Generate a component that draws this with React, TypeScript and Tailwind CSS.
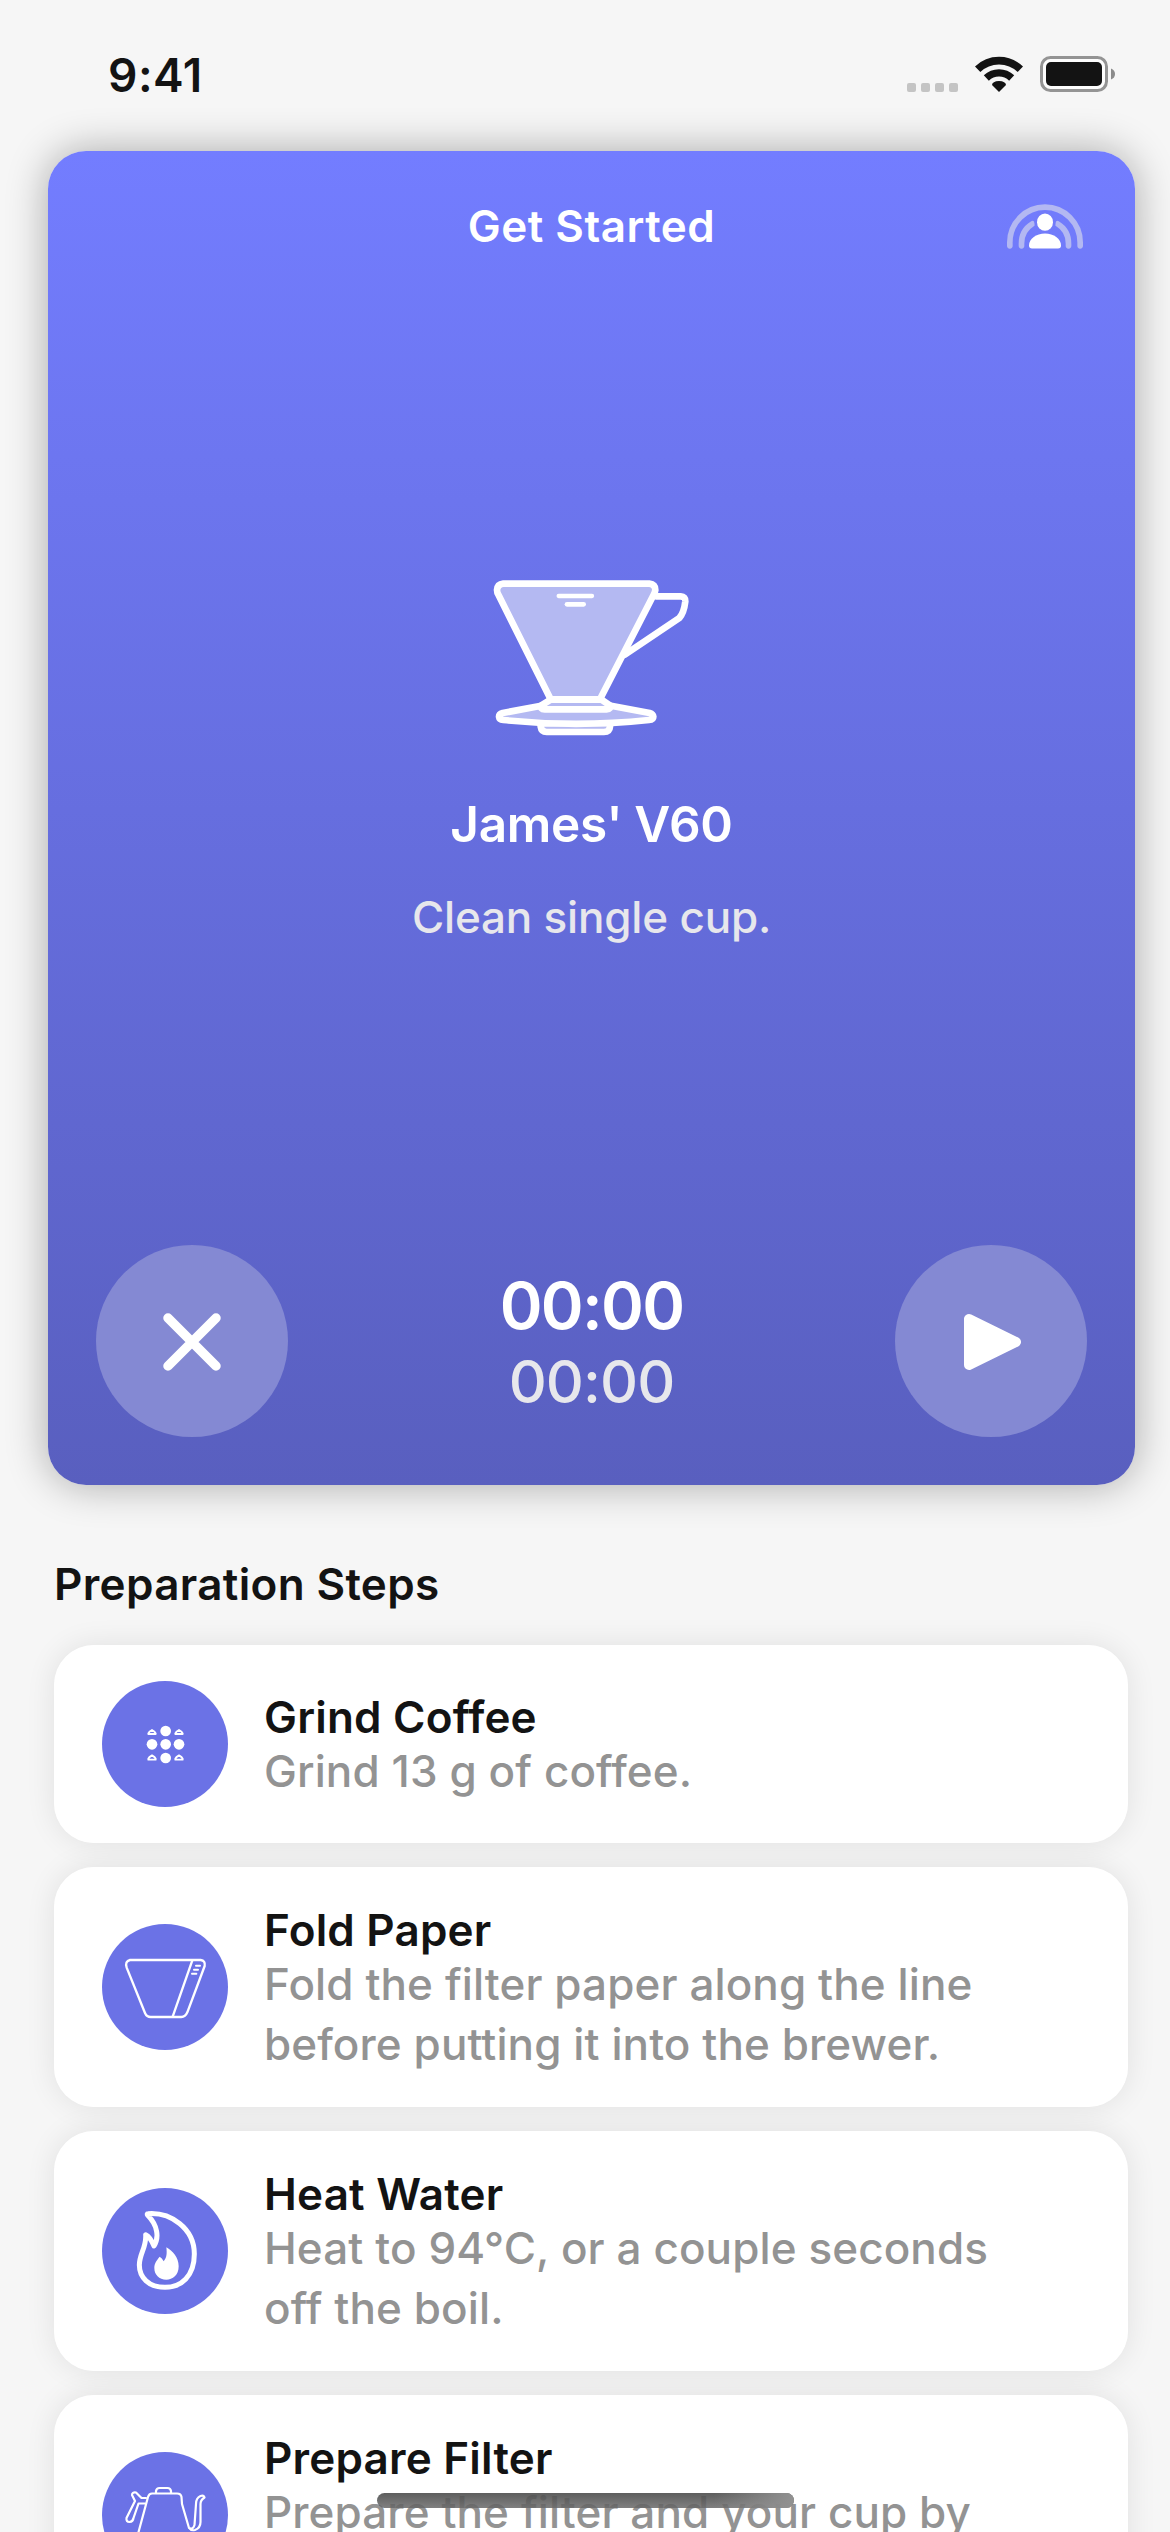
import type { ReactNode } from 'react'

function StatusBar() {
    return (
        <div className="flex h-[151px] items-start justify-between pt-12 pl-[108px] pr-[55px]">
            <span className="text-[46px] leading-[54px] font-semibold tracking-[0.5px]">9:41</span>
            <div className="flex items-end gap-[17px] pt-2">
                <svg width="51" height="36" viewBox="0 0 51 36" fill="#c4c4c4">
                    <rect x="0" y="27" width="9" height="9" rx="2" />
                    <rect x="14" y="27" width="9" height="9" rx="2" />
                    <rect x="28" y="27" width="9" height="9" rx="2" />
                    <rect x="42" y="27" width="9" height="9" rx="2" />
                </svg>
                <svg width="48" height="36" viewBox="0 0 144 108" fill="none" stroke="#131313">
                    <path d="M8 40 A92 92 0 0 1 136 40" strokeWidth="23" />
                    <path d="M34 66 A55 55 0 0 1 110 66" strokeWidth="22" />
                    <path d="M72 108 L51 87 Q52 76 72 75 Q92 76 93 87 Z" fill="#131313" stroke="none" />
                </svg>
                <svg width="75" height="36" viewBox="0 0 75 36">
                    <rect x="1.5" y="1.5" width="65" height="33" rx="9" fill="#fdfdfd" stroke="#949494" strokeWidth="3" />
                    <rect x="6" y="6" width="56" height="24" rx="5" fill="#131313" />
                    <path d="M71 12.5 Q75 14 75 18 Q75 22 71 23.5 Z" fill="#8b8b8b" />
                </svg>
            </div>
        </div>
    )
}

function ShareIcon() {
    return (
        <svg width="76" height="45" viewBox="0 0 228 134" fill="none">
            <g stroke="#b3b8f2" strokeWidth="17" strokeLinecap="round">
                <path d="M8.500 125 V115 A105.500 106 0 0 1 219.500 115 V125" />
                <path d="M43.500 125 V118 C43.500 92 56 71 76 59" />
                <path d="M184.500 125 V118 C184.500 92 172 71 152 59" />
            </g>
            <ellipse cx="114" cy="54" rx="32" ry="34" fill="#727bfa" />
            <ellipse cx="114" cy="54" rx="24" ry="26" fill="#fff" />
            <path d="M66 124 C66 104 88 88 114 88 C140 88 162 104 162 124 Q162 133 153 133 H75 Q66 133 66 124 Z" fill="#fff" />
        </svg>
    )
}

function DripperIcon() {
    return (
        <svg
            width="240"
            height="210"
            viewBox="4 0 720 630"
            fill="#b4b9f2"
            stroke="#fff"
            strokeWidth="20"
            strokeLinejoin="round"
            strokeLinecap="round"
        >
            <path d="M210 520 V530 Q212 546 228 546 H400 Q417 546 418 530 V518 Z" />
            <path d="M228 464 L96 489 Q85 492 85 500 Q86 509 98 510 Q316 533 535 510 Q548 509 548 500 Q547 492 537 489 L405 464 Z" />
            <path d="M240 449 L212 466 Q208 478 222 478 H408 Q422 478 417 466 L393 449 Z" />
            <path d="M556 139 H630 Q645 140 644 154 Q640 188 626 204 L462 314" fill="none" />
            <path d="M98 101 H536 Q554 103 554 120 Q553 128 549 134 L388 448 H240 L84 136 Q79 128 79 120 Q80 103 98 101 Z" />
            <path d="M264 138 H364" strokeWidth="13" />
            <path d="M289 163 H339" strokeWidth="14" />
        </svg>
    )
}

function GrindIcon() {
    return (
        <svg width="126" height="126" viewBox="0 0 378 378" fill="#fff">
            <circle cx="191" cy="150" r="16" />
            <circle cx="150" cy="190" r="16" />
            <circle cx="191" cy="190" r="16" />
            <circle cx="231" cy="190" r="16" />
            <circle cx="191" cy="231" r="16" />
            <g fill="none" stroke="#fff" strokeWidth="5.500" strokeLinejoin="round">
                <path d="M139 157 Q141 152 150 147 Q159 152 161 157 V159 H139 Z" />
                <path d="M220 157 Q222 152 231 147 Q240 152 242 157 V159 H220 Z" />
                <path d="M139 233 Q141 228 150 223 Q159 228 161 233 V236 H139 Z" />
                <path d="M220 233 Q222 228 231 223 Q240 228 242 233 V236 H220 Z" />
            </g>
        </svg>
    )
}

function PaperIcon() {
    return (
        <svg
            width="126"
            height="126"
            viewBox="0 0 378 378"
            fill="none"
            stroke="#fff"
            strokeWidth="7"
            strokeLinecap="round"
            strokeLinejoin="round"
        >
            <path d="M84 108 H296 Q311 110 308 126 L256 265 Q250 279 238 279 H146 Q134 279 129 267 L74 131 Q68 112 84 108 Z" />
            <path d="M271 109 L212 278" />
            <path d="M282 125 H294 M276 137 H288 M270 149 H283" strokeWidth="6" />
        </svg>
    )
}

function FlameIcon() {
    return (
        <svg width="126" height="126" viewBox="0 0 378 378" fill="none">
            <path
                d="M138 77 C205 72 277 120 277 198 C277 264 238 298 189 298 C140 298 112 268 112 231 C112 198 134 177 131 140 C143 146 150 159 156 174 C172 148 167 112 137 82 Q134 77 138 77 Z"
                stroke="#fff"
                strokeWidth="15"
                strokeLinejoin="round"
            />
            <path
                d="M193 178 C212 188 230 209 230 235 C230 262 212 275 193 275 C171 275 157 260 157 240 C157 226 164 217 173 206 Q180 209 185 220 C195 209 195 195 193 178 Z"
                fill="#fff"
            />
        </svg>
    )
}

function KettleIcon() {
    return (
        <svg
            width="126"
            height="126"
            viewBox="0 0 126 126"
            fill="none"
            stroke="#fff"
            strokeWidth="2.200"
            strokeLinecap="round"
            strokeLinejoin="round"
        >
            <path d="M54 41 V39 Q54.500 36 57.500 36 H65.500 Q68.500 36 69 39 V41" />
            <path d="M36 82 L46 45 Q47 41.500 50 41.500 H75 Q79 41.500 79.500 45 L80 52 L87 76 Q89 79 93 78 Q98.500 76 98.500 70 V52 Q98.500 48 102.500 45.500 Q102 43 98.500 44 Q94 46 94 52 L92.500 73 Q91 78 87 76" />
            <path d="M44 46 H39.500 L34 40.500 Q30 40 30 43 L33 49 L24.500 66 Q24 70 27.500 70 Q31 69.500 31.500 66 L36.500 51.500 H43" />
        </svg>
    )
}

const steps: { title: string; text: ReactNode; icon: ReactNode }[] = [
    { title: 'Grind Coffee', text: 'Grind 13 g of coffee.', icon: <GrindIcon /> },
    {
        title: 'Fold Paper',
        text: <>Fold the filter paper along the line<br />before putting it into the brewer.</>,
        icon: <PaperIcon />,
    },
    {
        title: 'Heat Water',
        text: <>Heat to 94°C, or a couple seconds<br />off the boil.</>,
        icon: <FlameIcon />,
    },
    {
        title: 'Prepare Filter',
        text: <>Prepare the filter and your cup by<br />&nbsp;</>,
        icon: <KettleIcon />,
    },
]

function BrewCard() {
    return (
        <section className="flex h-[1334px] flex-col rounded-[38px] bg-linear-to-b from-[#737dff] to-[#595fbf] p-12 text-white shadow-[0_0_42px_rgba(0,0,0,0.32)]">
            <div className="grid grid-cols-3 items-center">
                <h1 className="col-start-2 text-center text-[44px] leading-[54px] font-semibold tracking-[0.5px]">Get Started</h1>
                <div className="flex justify-end pr-1">
                    <ShareIcon />
                </div>
            </div>
            <div className="flex flex-1 flex-col items-center justify-center pb-1">
                <DripperIcon />
                <h2 className="mt-[34px] text-[49.5px] leading-[60px] font-semibold tracking-[-0.35px]">James' V60</h2>
                <p className="mt-9 text-[44px] leading-[54px] font-medium tracking-[-0.19px] text-[#e7e7ec]">Clean single cup.</p>
            </div>
            <div className="flex items-center justify-between">
                <button className="flex size-[192px] items-center justify-center rounded-full bg-[#8489d3]">
                    <svg width="60" height="60" viewBox="0 0 60 60" stroke="#fff" strokeWidth="9.500" strokeLinecap="round">
                        <path d="M6 7 L54 55 M54 7 L6 55" />
                    </svg>
                </button>
                <div className="flex flex-col items-center gap-[3px] pt-[2px]">
                    <span className="text-[65px] leading-[76px] font-semibold tracking-[-1.7px]">00:00</span>
                    <span className="text-[59px] leading-[70px] font-medium tracking-[-0.9px] text-[#e7e7ec]">00:00</span>
                </div>
                <button className="flex size-[192px] items-center justify-center rounded-full bg-[#8489d3]">
                    <svg width="60" height="60" viewBox="0 0 60 60" fill="#fff" stroke="#fff" strokeWidth="10" strokeLinejoin="round">
                        <path d="M8 8 V54 L55 31 Z" />
                    </svg>
                </button>
            </div>
        </section>
    )
}

export default function App() {
    return (
        <div className="relative h-[2532px] w-[1170px] overflow-hidden bg-[#f6f6f6] font-['Inter',sans-serif] text-[#131313]">
            <StatusBar />
            <div className="pl-12 pr-[35px]">
                <BrewCard />
            </div>
            <div className="pt-[72px] pl-[54px] pr-[42px]">
                <h3 className="text-[44px] leading-[54px] font-semibold tracking-[0.35px]">Preparation Steps</h3>
                <ul className="mt-[34px] flex flex-col gap-6">
                    {steps.map(({ title, text, icon }) => (
                        <li key={title} className="rounded-[40px] shadow-[0_0_30px_rgba(0,0,0,0.09)]">
                            {/* relative keeps the neighbours' shadows underneath */}
                            <div className="relative flex items-center gap-9 rounded-[40px] bg-white px-12 py-9">
                                <div className="size-[126px] shrink-0 rounded-full bg-[#6b72e6]">{icon}</div>
                                <div>
                                    <h4 className="text-[44px] leading-[54px] font-semibold tracking-[0.2px]">{title}</h4>
                                    <p className="-my-[3px] text-[44px] leading-[60px] font-medium tracking-[0.1px] text-[#939393]">{text}</p>
                                </div>
                            </div>
                        </li>
                    ))}
                </ul>
            </div>
            <div className="absolute top-[2493px] left-[377px] flex h-[15px] w-[417px] justify-end overflow-hidden rounded-full bg-linear-to-b from-[#4c4c4c]/90 to-[#6a6a6a]/85">
                <div className="h-full w-20 bg-linear-to-r from-transparent to-[#929292]" />
            </div>
        </div>
    )
}
